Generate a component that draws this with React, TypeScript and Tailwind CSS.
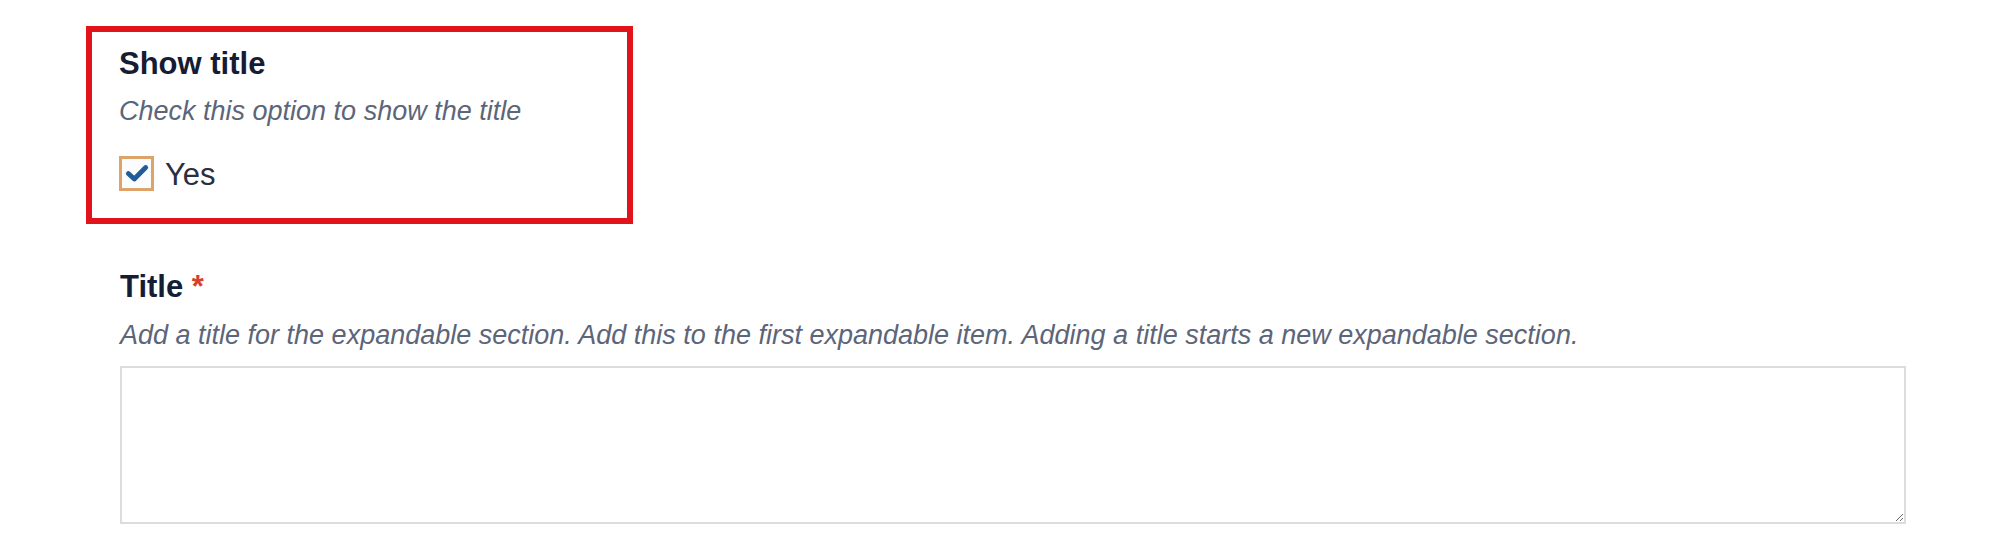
import { useState } from 'react';

function CheckIcon() {
  return (
    <svg viewBox="0 0 24 24" className="h-[26px] w-[26px]" fill="none">
      <path
        d="M4 12.5l5.5 5 10.5-10.5"
        stroke="#1f5c99"
        strokeWidth="4.5"
        strokeLinecap="round"
        strokeLinejoin="round"
      />
    </svg>
  );
}

export default function App() {
  const [checked, setChecked] = useState(true);

  return (
    <div className="h-[560px] w-[2000px] bg-white font-['Liberation_Sans',Arial,sans-serif]">
      <div className="pl-[86px] pt-[26px]">
        <div className="w-[547px] border-[6px] border-[#e1141c] pb-[26px] pl-[27px] pt-[15px]">
          <div className="text-[31px] font-bold leading-[34px] text-[#161c33]">
            Show title
          </div>
          <div className="mt-[14px] text-[27px] italic leading-[32px] text-[#5c6579]">
            Check this option to show the title
          </div>
          <label className="mt-[27px] flex cursor-pointer items-center gap-[11px]">
            <button
              type="button"
              onClick={() => setChecked(!checked)}
              className="flex h-[35px] w-[35px] items-center justify-center border-[3px] border-[#dea369] bg-[#fbfcfe]"
            >
              {checked && <CheckIcon />}
            </button>
            <span className="mt-[3px] text-[31px] leading-[35px] text-[#2a2f3f]">
              Yes
            </span>
          </label>
        </div>
      </div>

      <div className="pl-[120px] pr-[94px] pt-[46px]">
        <div className="text-[31px] font-bold leading-[34px] text-[#161c33]">
          Title <span className="text-[#d6402f]">*</span>
        </div>
        <div className="mt-[15px] text-[27px] italic leading-[32px] text-[#5c6579]">
          Add a title for the expandable section. Add this to the first expandable item. Adding a
          title starts a new expandable section.
        </div>
        <textarea className="mt-[15px] block h-[158px] w-full resize-y border-2 border-[#dcdcdc] bg-white outline-none" />
      </div>
    </div>
  );
}
